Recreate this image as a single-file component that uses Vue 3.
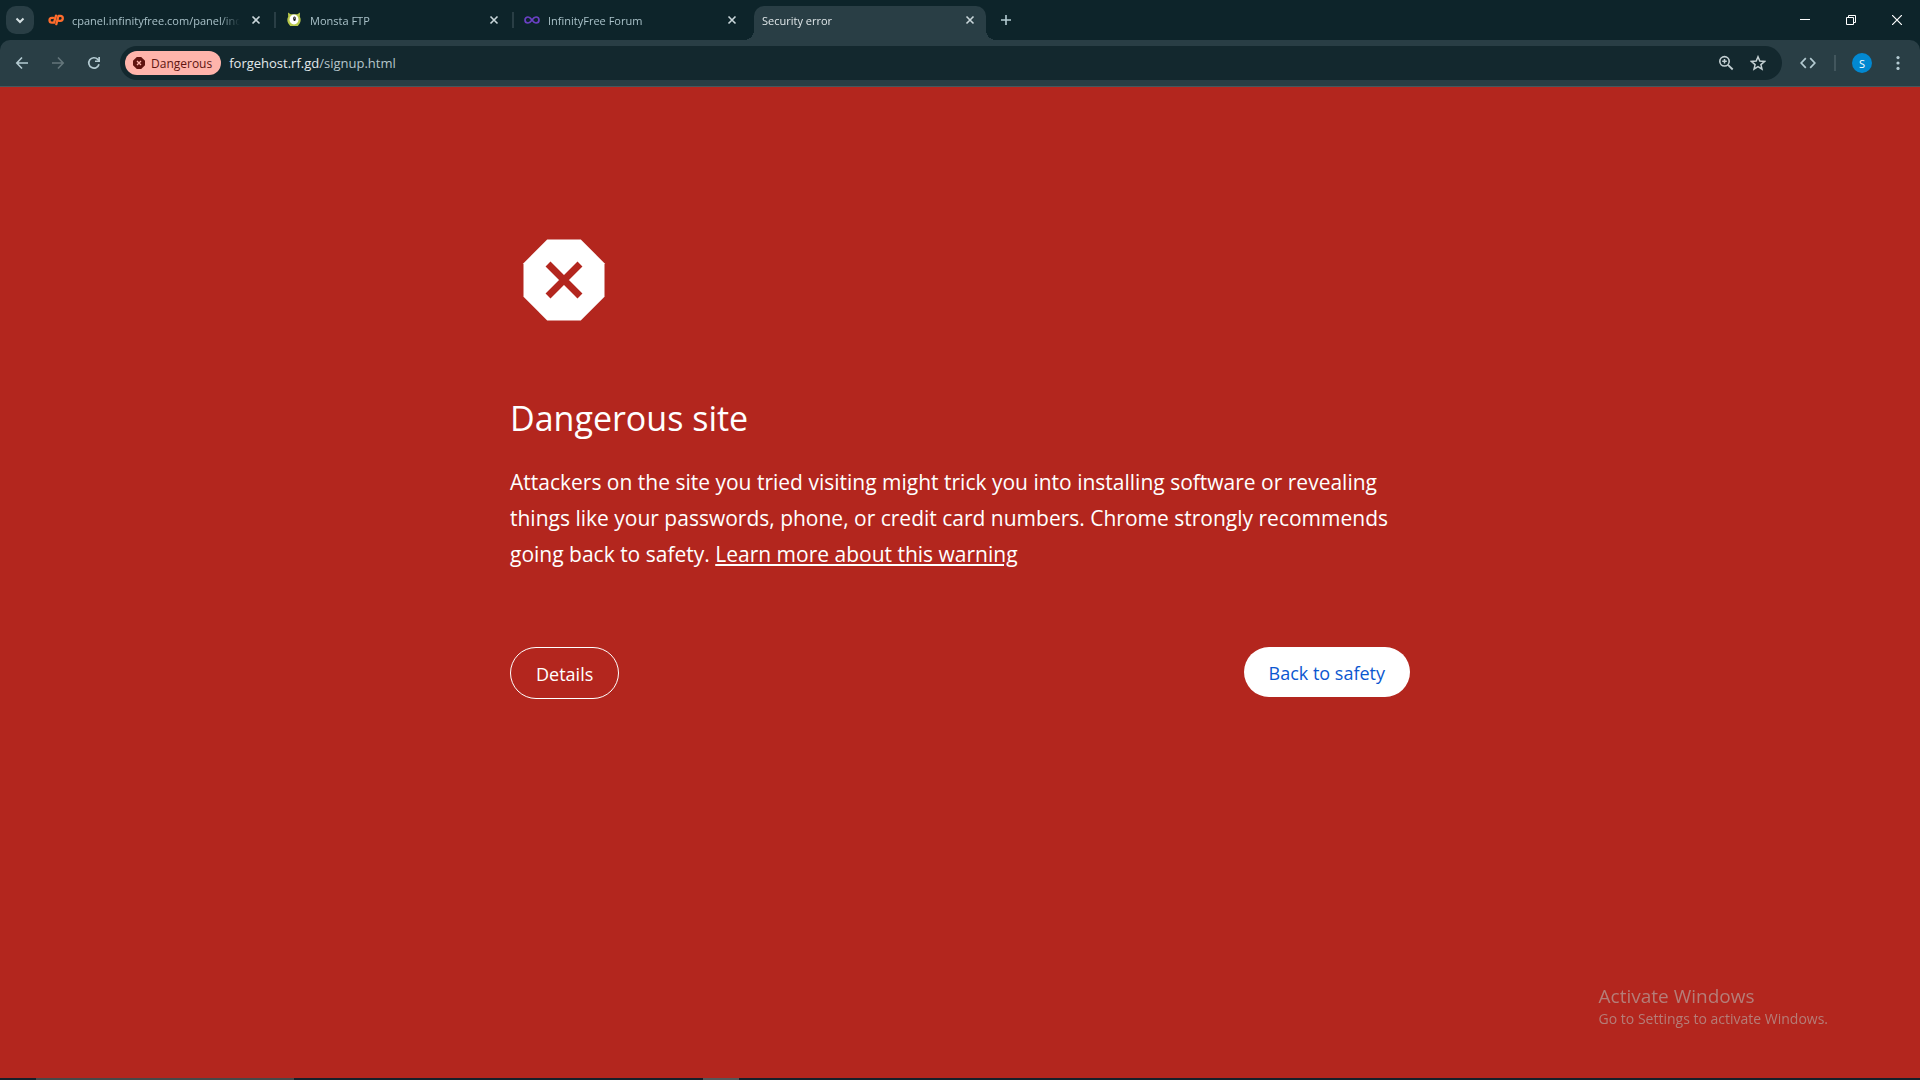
<template>
  <div class="window">
    <header class="tab-strip">
      <button class="tab-search" type="button" aria-label="Search tabs">
        <svg width="28" height="28" viewBox="0 0 28 28"><path d="M10.5 12.5l3.5 3.5 3.5-3.5" fill="none" stroke="#d5e0e3" stroke-width="2" /></svg>
      </button>

      <nav class="tabs" aria-label="Tabs">
        <div v-for="tab in tabs" :key="tab.title" class="tab" :class="{ active: tab.active }">
          <svg v-if="tab.icon === 'cpanel'" class="favicon" viewBox="0 0 16 16">
            <g fill="none" stroke="#ff6c2c" stroke-width="2.3" stroke-linecap="round" stroke-linejoin="round">
              <path d="M5.2 5.8H3.9a2.3 2.3 0 0 0 0 4.8h2.2L8 3.6" />
              <path d="M8.3 12.2l2.2-8.4h1.8a2.5 2.5 0 0 1 0 5h-1.5" />
            </g>
          </svg>
          <svg v-else-if="tab.icon === 'monsta'" class="favicon" viewBox="0 0 16 16">
            <path d="M2 .5l2.600 1.700h6.800L14 .5l-.2 4.300c1.300 2 1 4.600 0 6.400L11.800 14H4.200l-2-2.800c-1-1.800-1.300-4.400 0-6.400z" fill="#b9c94a" />
            <ellipse cx="8" cy="7.5" rx="4.500" ry="5" fill="#fff" />
            <ellipse cx="8.5" cy="6.8" rx="1.300" ry="2.300" fill="#111" />
            <circle cx="8.5" cy="6" r=".5" fill="#fff" />
          </svg>
          <svg v-else-if="tab.icon === 'infinity'" class="favicon" viewBox="0 0 16 16">
            <path d="M8 8C6.500 5.900 5.500 5 4 5a3 3 0 0 0 0 6c1.500 0 2.500-.9 4-3s2.500-3 4-3a3 3 0 0 1 0 6c-1.500 0-2.500-.9-4-3z" fill="none" stroke="#6a40c4" stroke-width="1.700" />
          </svg>
          <a class="tab-title" href="#">{{ tab.title }}</a>
          <button class="tab-close" type="button" :aria-label="`Close ${tab.title}`">
            <svg width="16" height="16" viewBox="0 0 16 16"><path d="M4.5 4.5l7 7M11.5 4.5l-7 7" stroke="currentColor" stroke-width="1.600" /></svg>
          </button>
        </div>
      </nav>

      <button class="new-tab" type="button" aria-label="New tab">
        <svg width="20" height="20" viewBox="0 0 20 20"><path d="M10 5v10M5 10h10" stroke="#b4cbd2" stroke-width="1.600" /></svg>
      </button>

      <div class="window-controls">
        <button type="button" aria-label="Minimize">
          <svg width="10" height="10" viewBox="0 0 10 10"><path d="M0 4.5h10" stroke="#fff" /></svg>
        </button>
        <button type="button" aria-label="Restore">
          <svg width="10" height="10" viewBox="0 0 10 10"><path d="M.5 2.5h7v7h-7zM2.5 2.5v-2h7v7h-2" fill="none" stroke="#fff" /></svg>
        </button>
        <button type="button" aria-label="Close">
          <svg width="10" height="10" viewBox="0 0 10 10"><path d="M0 0l10 10M10 0L0 10" stroke="#fff" stroke-width="1.200" /></svg>
        </button>
      </div>
    </header>

    <div class="toolbar-back">
      <div class="toolbar">
        <div class="nav-buttons">
          <button type="button" aria-label="Back">
            <svg width="16" height="16" viewBox="0 0 16 16"><path d="M8 2.500L2.800 8 8 13.500M3 8h11" fill="none" stroke="#b4cbd2" stroke-width="1.600" /></svg>
          </button>
          <button type="button" aria-label="Forward" disabled>
            <svg width="16" height="16" viewBox="0 0 16 16"><path d="M8 2.500L13.200 8 8 13.500M13 8H2" fill="none" stroke="#64767b" stroke-width="1.600" /></svg>
          </button>
          <button type="button" aria-label="Reload">
            <svg width="16" height="16" viewBox="0 0 16 16">
              <path d="M13 9.300A5.200 5.200 0 1 1 11.800 4.400l1.200 1.300" fill="none" stroke="#b4cbd2" stroke-width="1.700" />
              <path d="M14 2v5H9V5.400h3.300V2z" fill="#b4cbd2" />
            </svg>
          </button>
        </div>

        <div class="omnibox">
          <button class="danger-chip" type="button">
            <svg width="12" height="12" viewBox="0 0 12 12">
              <path d="M3.800 0h4.400L12 3.800v4.400L8.200 12H3.800L0 8.200V3.800z" fill="#601410" />
              <path d="M4 4l4 4M8 4L4 8" stroke="#ffb4ab" stroke-width="1.300" />
            </svg>
            <span>Dangerous</span>
          </button>
          <div class="url" role="textbox" aria-label="Address bar">forgehost.rf.gd<span>/signup.html</span></div>
          <button class="box-icon" type="button" aria-label="Zoom">
            <svg width="16" height="16" viewBox="0 0 16 16">
              <circle cx="6.500" cy="6.300" r="4.700" fill="none" stroke="#c4d0d3" stroke-width="1.600" />
              <path d="M10 9.800l4.700 4.700" stroke="#c4d0d3" stroke-width="1.800" />
              <path d="M6.500 4v4.600M4.200 6.300h4.600" stroke="#c4d0d3" stroke-width="1.500" />
            </svg>
          </button>
          <button class="box-icon" type="button" aria-label="Bookmark this tab">
            <svg width="16" height="16" viewBox="0 0 16 16"><path d="M8 1.800l1.800 4.300 4.700.4-3.600 3.100 1.100 4.600L8 11.700l-4 2.500 1.100-4.600-3.600-3.100 4.700-.4z" fill="none" stroke="#c4d0d3" stroke-width="1.500" /></svg>
          </button>
        </div>

        <div class="actions">
          <button type="button" aria-label="Developer tools">
            <svg width="16" height="16" viewBox="0 0 16 16"><path d="M5.800 3.200L1.200 8l4.600 4.800M10.200 3.200L14.800 8l-4.600 4.800" fill="none" stroke="#b4cbd2" stroke-width="1.700" /></svg>
          </button>
          <i class="divider"></i>
          <button class="avatar" type="button" aria-label="Profile">S</button>
          <button type="button" aria-label="Menu">
            <svg width="16" height="16" viewBox="0 0 16 16" fill="#b4cbd2"><circle cx="8" cy="2.600" r="1.600" /><circle cx="8" cy="8" r="1.600" /><circle cx="8" cy="13.400" r="1.600" /></svg>
          </button>
        </div>
      </div>
    </div>

    <main class="page">
      <div class="interstitial">
        <svg class="warning-icon" viewBox="0 0 24 24">
          <path d="M15.730 3H8.270L3 8.270v7.460L8.270 21h7.460L21 15.730V8.270z" fill="#fff" />
          <path d="M8.450 8.450l7.100 7.100M15.550 8.450l-7.100 7.100" stroke="#b3261e" stroke-width="1.550" />
        </svg>
        <h1>Dangerous site</h1>
        <p>
          Attackers on the site you tried visiting might trick you into installing software or revealing
          things like your passwords, phone, or credit card numbers. Chrome strongly recommends going
          back to safety. <a href="#">Learn more about this warning</a>
        </p>
        <div class="buttons">
          <button class="details" type="button">Details</button>
          <button class="primary" type="button">Back to safety</button>
        </div>
      </div>
    </main>

    <footer class="taskbar">
      <span class="task-search"></span>
      <span class="task-active"></span>
    </footer>

    <aside class="watermark">
      <div class="watermark-title">Activate Windows</div>
      <div>Go to Settings to activate Windows.</div>
    </aside>
  </div>
</template>

<script setup>
// Open tabs, left to right
const tabs = [
  { title: 'cpanel.infinityfree.com/panel/index.php', icon: 'cpanel' },
  { title: 'Monsta FTP', icon: 'monsta' },
  { title: 'InfinityFree Forum', icon: 'infinity' },
  { title: 'Security error', active: true },
]
</script>

<style>
body {
  background: #b3261e;
}
</style>

<style scoped>
.window {
  display: flex;
  flex-direction: column;
  min-height: 100vh;
  background: #b3261e;
  font-family: "Open Sans", "Noto Sans", sans-serif;
  font-size: 12px;
}

button {
  display: flex;
  align-items: center;
  justify-content: center;
  padding: 0;
  border: 0;
  background: none;
  color: inherit;
  font-family: inherit;
  cursor: pointer;
}

svg {
  display: block;
  flex: none;
}

/* tab strip */
.tab-strip {
  display: flex;
  height: 40px;
  background: #0d242a;
}

.tab-search {
  width: 28px;
  height: 28px;
  margin: 6px 6px 0;
  border-radius: 10px;
  background: #293e45;
}

.tabs {
  display: flex;
  gap: 6px;
}

.tab {
  position: relative;
  display: flex;
  align-items: center;
  box-sizing: border-box;
  width: 232px;
  height: 34px;
  margin-top: 6px;
  padding: 0 8px 6px;
  color: #a9c1c8;
}

.tab:nth-child(2)::before,
.tab:nth-child(3)::before {
  content: "";
  position: absolute;
  left: -4px;
  top: 6px;
  width: 2px;
  height: 16px;
  background: #293e45;
}

.tab.active {
  border-radius: 10px 10px 0 0;
  background: #293e45;
  color: #dfe6e8;
}

/* flared feet of the active tab */
.tab.active::before,
.tab.active::after {
  content: "";
  position: absolute;
  bottom: 0;
  width: 10px;
  height: 10px;
}

.tab.active::before {
  right: 100%;
  background: radial-gradient(circle at 0 0, transparent 10px, #293e45 10px);
}

.tab.active::after {
  left: 100%;
  background: radial-gradient(circle at 100% 0, transparent 10px, #293e45 10px);
}

.favicon {
  width: 16px;
  height: 16px;
  margin-right: 8px;
}

.tab-title {
  flex: 1;
  overflow: hidden;
  margin-right: 8px;
  padding-top: 2px;
  color: inherit;
  font-size: 11px;
  line-height: 16px;
  text-decoration: none;
  white-space: nowrap;
  mask-image: linear-gradient(to left, transparent, #000 20px);
}

.tab-close {
  width: 16px;
  height: 16px;
  color: #c9d6da;
}

.new-tab {
  width: 20px;
  height: 28px;
  margin: 6px 0 0 10px;
}

.window-controls {
  display: flex;
  margin-left: auto;
}

.window-controls button {
  width: 46px;
}

/* toolbar */
.toolbar-back {
  background: #0d242a;
}

.toolbar {
  display: flex;
  align-items: center;
  box-sizing: border-box;
  height: 47px;
  border-bottom: 1px solid #46575d;
  border-radius: 10px 10px 0 0;
  background: #293e45;
}

.nav-buttons {
  display: flex;
  gap: 8px;
  padding: 0 12px 0 8px;
}

.nav-buttons button {
  width: 28px;
  height: 28px;
}

.omnibox {
  display: flex;
  flex: 1;
  align-items: center;
  box-sizing: border-box;
  height: 34px;
  padding: 0 8px 0 5px;
  border-radius: 17px;
  background: #13282e;
}

.danger-chip {
  gap: 6px;
  height: 24px;
  padding: 0 9px 0 8px;
  border-radius: 12px;
  background: #ffb4ab;
  color: #601410;
  font-size: 12px;
}

.url {
  flex: 1;
  margin-left: 8px;
  color: #e3eaec;
  font-size: 13px;
  line-height: 20px;
}

.url span {
  color: #b6c6cb;
}

.box-icon {
  width: 32px;
  height: 28px;
}

.actions {
  display: flex;
  align-items: center;
  padding-right: 8px;
}

.actions button {
  width: 28px;
  height: 28px;
  margin-left: 12px;
}

.divider {
  width: 2px;
  height: 16px;
  margin-left: 12px;
  background: #42565d;
}

.actions .avatar {
  width: 20px;
  height: 20px;
  margin-left: 16px;
  border-radius: 50%;
  background: #0288d1;
  color: #fff;
  font-size: 11px;
}

/* warning page */
.page {
  flex: 1;
  padding: 139px 24px 0;
  color: #fff;
}

.interstitial {
  max-width: 900px;
  margin: 0 auto;
}

.warning-icon {
  width: 108px;
  height: 108px;
}

h1 {
  margin: 60px 0 22px;
  font-size: 34px;
  font-weight: 400;
  line-height: 48px;
}

p {
  margin: 0;
  font-size: 21px;
  line-height: 36px;
}

p a {
  color: inherit;
}

.buttons {
  display: flex;
  align-items: flex-start;
  justify-content: space-between;
  margin-top: 75px;
}

.buttons button {
  height: 50px;
  padding: 2px 25px 0;
  border-radius: 26px;
  font-size: 18px;
}

.buttons .details {
  height: 52px;
  border: 1px solid #fff;
}

.buttons .primary {
  background: #fff;
  color: #0b57d0;
}

/* sliver of the hidden taskbar */
.taskbar {
  display: flex;
  height: 2px;
  background: #16202a;
}

.task-search {
  width: 258px;
  margin-left: 36px;
  background: #484848;
}

.task-active {
  width: 36px;
  margin-left: 409px;
  background: #555759;
}

.watermark {
  position: fixed;
  right: 92px;
  bottom: 51px;
  color: #b57d78;
  font-size: 14px;
  line-height: 20px;
}

.watermark-title {
  font-size: 19px;
  line-height: 26px;
}
</style>
